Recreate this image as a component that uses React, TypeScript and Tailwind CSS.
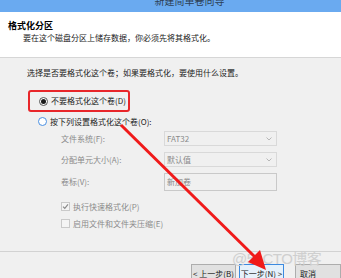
import React from 'react';

const font = { fontFamily: '"Microsoft YaHei", "Noto Sans CJK SC", "Noto Sans", sans-serif' };

function Select({ value }: { value: string }) {
  return (
    <div className="w-[113px] h-[15px] border border-[#d9d9d9] bg-[#f0f0f0] flex items-center justify-between pl-[2px] pr-[4px]">
      <span className="text-[8px] leading-none text-[#8a8a8a] whitespace-nowrap">{value}</span>
      <svg width="6" height="4" viewBox="0 0 6 4">
        <path d="M0.5 0.5 L3 3 L5.5 0.5" fill="none" stroke="#a8a8a8" strokeWidth="0.8" />
      </svg>
    </div>
  );
}

function Label({ children }: { children: React.ReactNode }) {
  return <div className="w-[103px] text-[8px] leading-none text-[#8a8a8a] whitespace-nowrap">{children}</div>;
}

export default function App() {
  return (
    <div className="relative w-[341px] h-[278px] overflow-hidden bg-[#f0f0f0]" style={font}>
      {/* title bar */}
      <div className="h-[12px] bg-[#6aaaf0] flex justify-center overflow-hidden">
        <span className="ml-[38px] -mt-[5px] text-[10px] leading-[12px] text-[#2d3f55] whitespace-nowrap">新建简单卷向导</span>
      </div>

      {/* header */}
      <div className="h-[46px] bg-white border-b border-[#d6d6d6] pl-[8px] pt-[9px]">
        <div className="text-[9px] leading-[10px] font-bold text-black">格式化分区</div>
        <div className="pl-[15px] mt-[2px] text-[8px] leading-[10px] text-[#1a1a1a] whitespace-nowrap">
          要在这个磁盘分区上储存数据，你必须先将其格式化。
        </div>
      </div>

      {/* body */}
      <div className="h-[194px] border-b border-[#d2d2d2] pl-[27px] pt-[10px]">
        <div className="text-[8px] leading-[10px] text-[#1a1a1a] whitespace-nowrap">
          选择是否要格式化这个卷；如果要格式化，要使用什么设置。
        </div>

        <div className="mt-[12px] ml-[1px] w-[102px] h-[22px] border-2 border-[#e8262a] rounded-[3px] flex items-center pl-[9px] gap-[3px]">
          <div className="w-[9px] h-[9px] rounded-full border border-[#555] bg-white flex items-center justify-center">
            <div className="w-[5px] h-[5px] rounded-full bg-[#1a1a1a]" />
          </div>
          <span className="text-[8px] leading-none text-[#1a1a1a] whitespace-nowrap">不要格式化这个卷(D)</span>
        </div>

        <div className="mt-[5px] ml-[11px] flex items-center gap-[3px]">
          <div className="w-[9px] h-[9px] rounded-full border border-[#4a90e2] bg-white" />
          <span className="text-[8px] leading-none text-[#1a1a1a] whitespace-nowrap">按下列设置格式化这个卷(O):</span>
        </div>

        <div className="ml-[34px] mt-[5px] flex flex-col gap-[6px]">
          <div className="flex items-center">
            <Label>文件系统(F):</Label>
            <Select value="FAT32" />
          </div>
          <div className="flex items-center">
            <Label>分配单元大小(A):</Label>
            <Select value="默认值" />
          </div>
          <div className="flex items-center">
            <Label>卷标(V):</Label>
            <div className="w-[113px] h-[18px] border border-[#c9c9c9] bg-[#f0f0f0] pl-[2px] pt-[3px] text-[8px] leading-[10px] text-[#8a8a8a]">
              新加卷
            </div>
          </div>
        </div>

        <div className="ml-[34px] mt-[11px] flex flex-col gap-[8px]">
          <div className="flex items-center gap-[3px]">
            <div className="w-[9px] h-[9px] border border-[#c9c9c9] bg-[#f4f4f4] flex items-center justify-center">
              <svg width="7" height="7" viewBox="0 0 7 7">
                <path d="M1 3.6 L2.8 5.4 L6 1.4" fill="none" stroke="#8a8a8a" strokeWidth="1.2" />
              </svg>
            </div>
            <span className="text-[8px] leading-none text-[#8a8a8a] whitespace-nowrap">执行快速格式化(P)</span>
          </div>
          <div className="flex items-center gap-[3px]">
            <div className="w-[9px] h-[9px] border border-[#c9c9c9] bg-[#f4f4f4]" />
            <span className="text-[8px] leading-none text-[#8a8a8a] whitespace-nowrap">启用文件和文件夹压缩(E)</span>
          </div>
        </div>
      </div>

      {/* buttons */}
      <div className="pt-[12px] pl-[191px] flex gap-[3px]">
        <div className="w-[57px] h-[20px] border border-[#adadad] bg-[#e1e1e1] text-[8px] leading-none text-[#1a1a1a] flex items-center justify-center whitespace-nowrap">
          &lt; 上一步(B)
        </div>
        <div className="w-[57px] h-[20px] border border-[#3c8ae0] bg-[#e5f1fb] text-[8px] leading-none text-[#1a1a1a] flex items-center justify-center whitespace-nowrap">
          下一步(N) &gt;
        </div>
        <div className="ml-[8px] w-[57px] h-[20px] border border-[#adadad] bg-[#e1e1e1] text-[8px] leading-none text-[#1a1a1a] flex items-center pl-[4px] whitespace-nowrap">
          取消
        </div>
      </div>

      {/* watermark */}
      <div
        className="absolute left-[232px] top-[251px] text-[15px] leading-none text-[#cfcfcf] tracking-[-0.5px] whitespace-nowrap"
        style={{ fontFamily: '"Liberation Sans", "Noto Sans CJK SC", sans-serif' }}
      >
        @51CTO博客
      </div>

      {/* red arrow */}
      <svg className="absolute left-0 top-0 pointer-events-none" width="341" height="278" viewBox="0 0 341 278">
        <line x1="121" y1="125" x2="256" y2="258" stroke="#f01a1a" strokeWidth="3" />
        <polygon points="266,270 248,262 260,250" fill="#f01a1a" />
      </svg>
    </div>
  );
}
